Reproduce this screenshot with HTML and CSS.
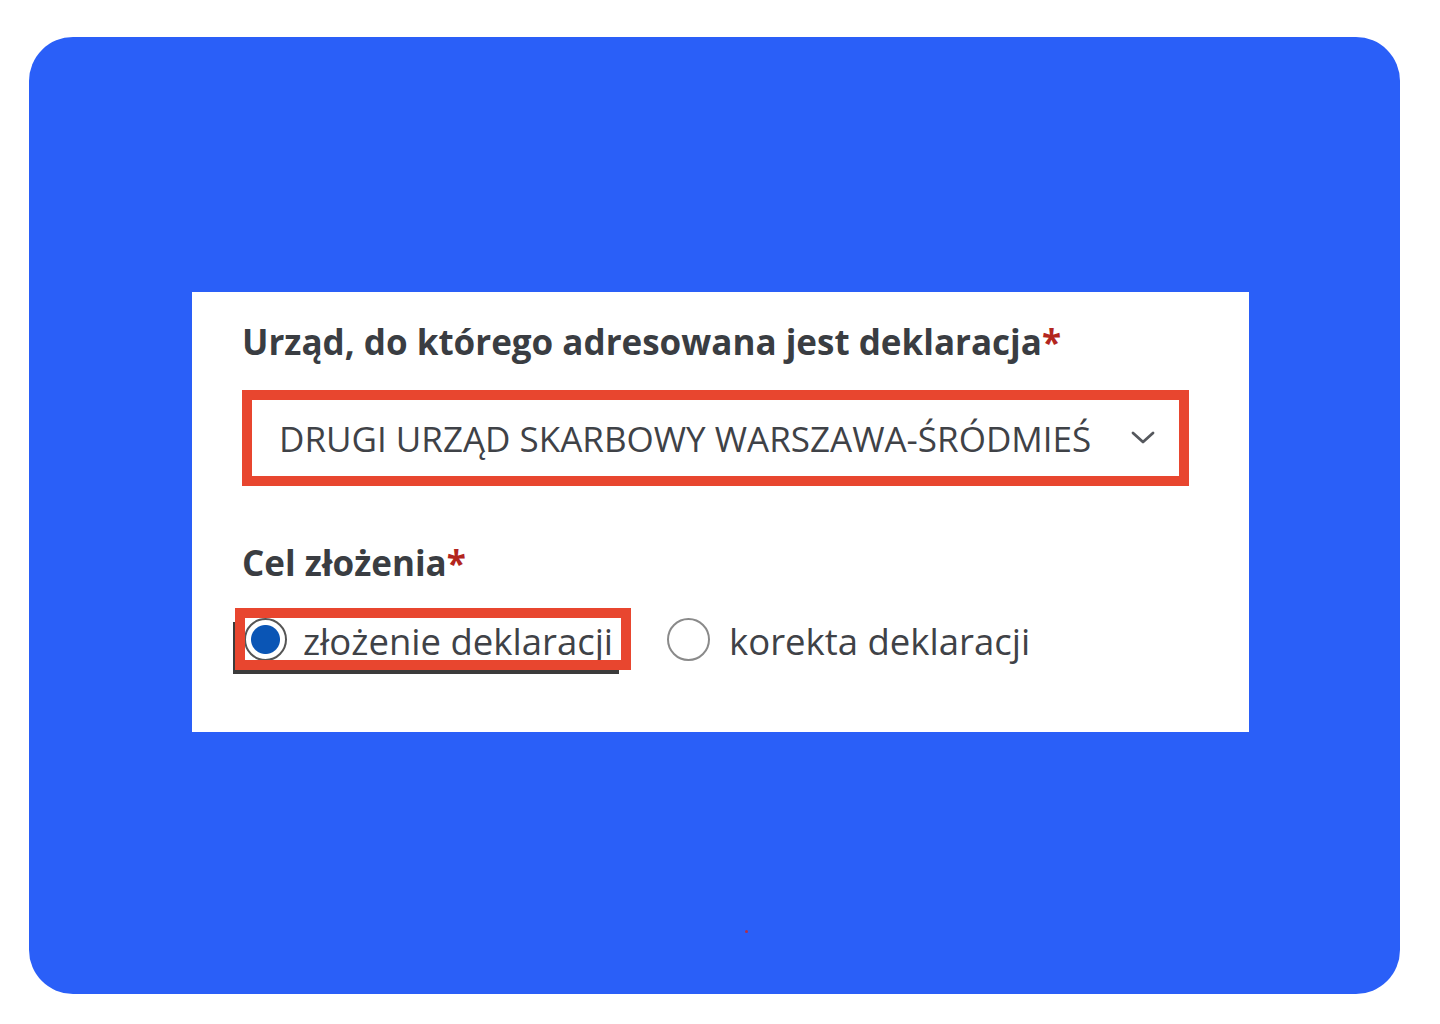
FILE: index.html
```html
<!DOCTYPE html>
<html lang="pl">
<head>
<meta charset="utf-8">
<title>Deklaracja</title>
<link rel="stylesheet" href="styles.css">
</head>
<body>
<div class="panel">
  <form class="card">
    <div class="field-label">Urząd, do którego adresowana jest deklaracja<span class="req">*</span></div>
    <div class="select">
      <span class="select-text">DRUGI URZĄD SKARBOWY WARSZAWA-ŚRÓDMIEŚ</span>
      <svg class="chevron" width="24" height="14" viewBox="0 0 24 14"><path d="M2 2 L12 11 L22 2" fill="none" stroke="#55585d" stroke-width="2.8" stroke-linecap="round" stroke-linejoin="round"/></svg>
    </div>
    <div class="field-label second">Cel złożenia<span class="req">*</span></div>
    <div class="radios">
      <label class="radio highlighted"><span class="dot checked"></span><span class="radio-text">złożenie deklaracji</span></label>
      <label class="radio"><span class="dot"></span><span class="radio-text">korekta deklaracji</span></label>
    </div>
  </form>
  <span class="speck"></span>
</div>
</body>
</html>
```
FILE: styles.css
```css
html, body {
  margin: 0;
  padding: 0;
  background: #ffffff;
}
body {
  padding: 37px 40px 30px 29px;
  font-family: "Open Sans", "Noto Sans", sans-serif;
}
.panel {
  position: relative;
  box-sizing: border-box;
  width: 1371px;
  height: 957px;
  background: #2a5ff8;
  border-radius: 44px;
  padding: 255px 0 0 163px;
}
.card {
  box-sizing: border-box;
  width: 1057px;
  height: 440px;
  background: #ffffff;
  padding: 30px 50px 0 50px;
  margin: 0;
}
.field-label {
  font-size: 35px;
  line-height: 40px;
  font-weight: 700;
  color: #3a3d42;
}
.req {
  color: #b3261e;
}
.select {
  box-sizing: border-box;
  margin-top: 28px;
  width: 947px;
  height: 96px;
  border: 10px solid #e8462f;
  display: flex;
  align-items: center;
  justify-content: space-between;
  padding: 0 24px 0 27px;
}
.select-text {
  font-size: 35px;
  color: #3f4247;
}
.chevron {
  display: block;
}
.second {
  margin-top: 57px;
}
.radios {
  display: flex;
  align-items: center;
  margin-top: 25px;
  margin-left: -7px;
  gap: 36px;
}
.radio {
  position: relative;
  display: flex;
  align-items: center;
  gap: 19px;
  height: 62px;
  font-size: 36.5px;
  color: #3f4247;
}
.radio-text {
  padding-top: 4px;
}
.highlighted {
  box-sizing: border-box;
  width: 396px;
  padding-left: 9px;
  gap: 16px;
}
.highlighted::after {
  content: "";
  position: absolute;
  inset: 0;
  border: 10px solid #e8462f;
  box-shadow: -7px 9px 0 -5px #3b3b3b;
}
.dot {
  box-sizing: border-box;
  width: 43px;
  height: 43px;
  border-radius: 50%;
  border: 2px solid #8a8a8a;
  background: #ffffff;
  flex: none;
}
.dot.checked {
  border-color: #555555;
  background: radial-gradient(circle, #0a55b5 0 14px, #ffffff 15px);
}
.speck {
  position: absolute;
  left: 716px;
  top: 893px;
  width: 3px;
  height: 3px;
  border-radius: 50%;
  background: #b0304a;
}
```
